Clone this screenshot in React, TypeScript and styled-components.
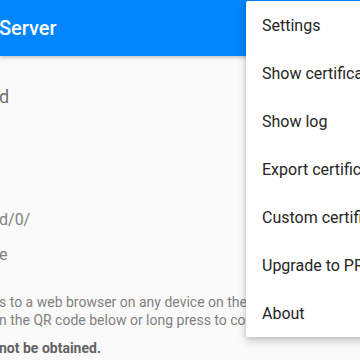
import React from 'react';
import styled, { createGlobalStyle } from 'styled-components';

const GlobalStyle = createGlobalStyle`
  html, body {
    margin: 0;
    padding: 0;
    background: #fafafa;
  }
  body {
    font-family: Roboto, "Noto Sans", sans-serif;
  }
`;

const Screen = styled.div`
  position: relative;
  width: 360px;
  height: 360px;
  overflow: hidden;
  background: #fafafa;
`;

const Toolbar = styled.header`
  height: 56px;
  background: #0286fe;
  display: flex;
  align-items: center;
  box-shadow: 0 2px 3px rgba(0, 0, 0, 0.2);
  position: relative;
  z-index: 1;
`;

const Title = styled.h1`
  margin: 0 0 0 -1px;
  font-size: 20px;
  font-weight: 500;
  color: #ffffff;
  white-space: nowrap;
`;

const Content = styled.main`
  display: flex;
  flex-direction: column;
`;

// one text row of the (mostly scrolled-off) status panel
const Line = styled.div<{ $size: number; $lh: number; $top: number; $bold?: boolean; $color?: string }>`
  margin-top: ${(p) => p.$top}px;
  margin-left: -1px;
  font-size: ${(p) => p.$size}px;
  line-height: ${(p) => p.$lh}px;
  font-weight: ${(p) => (p.$bold ? 700 : 400)};
  color: ${(p) => p.$color || '#808080'};
  white-space: nowrap;
`;

const Menu = styled.ul`
  position: absolute;
  top: 1px;
  left: 246px;
  width: 180px;
  margin: 0;
  padding: 0;
  list-style: none;
  background: #ffffff;
  border-radius: 2px;
  box-shadow: 0 4px 10px rgba(0, 0, 0, 0.2), 0 0 4px rgba(0, 0, 0, 0.12);
  z-index: 2;
`;

const MenuItem = styled.li`
  height: 48px;
  display: flex;
  align-items: center;
  padding-left: 16px;
  font-size: 16px;
  color: #262626;
  white-space: nowrap;
`;

const menuItems = [
  'Settings',
  'Show certificate',
  'Show log',
  'Export certificate',
  'Custom certificate',
  'Upgrade to PRO',
  'About',
];

const App: React.FC = () => {
  return (
    <Screen>
      <GlobalStyle />
      <Toolbar>
        <Title>Server</Title>
      </Toolbar>
      <Content>
        <Line $size={18} $lh={24} $top={29} $color="#6e6e6e">d</Line>
        <Line $size={16} $lh={20} $top={101}>d/0/</Line>
        <Line $size={16} $lh={20} $top={15}>e</Line>
        <Line $size={14} $lh={18} $top={28}>s to a web browser on any device on the same</Line>
        <Line $size={14} $lh={18} $top={0}>n the QR code below or long press to copy</Line>
        <Line $size={14} $lh={18} $top={10} $bold $color="#626262">not be obtained.</Line>
      </Content>
      <Menu>
        {menuItems.map((item) => (
          <MenuItem key={item}>{item}</MenuItem>
        ))}
      </Menu>
    </Screen>
  );
};

export default App;
